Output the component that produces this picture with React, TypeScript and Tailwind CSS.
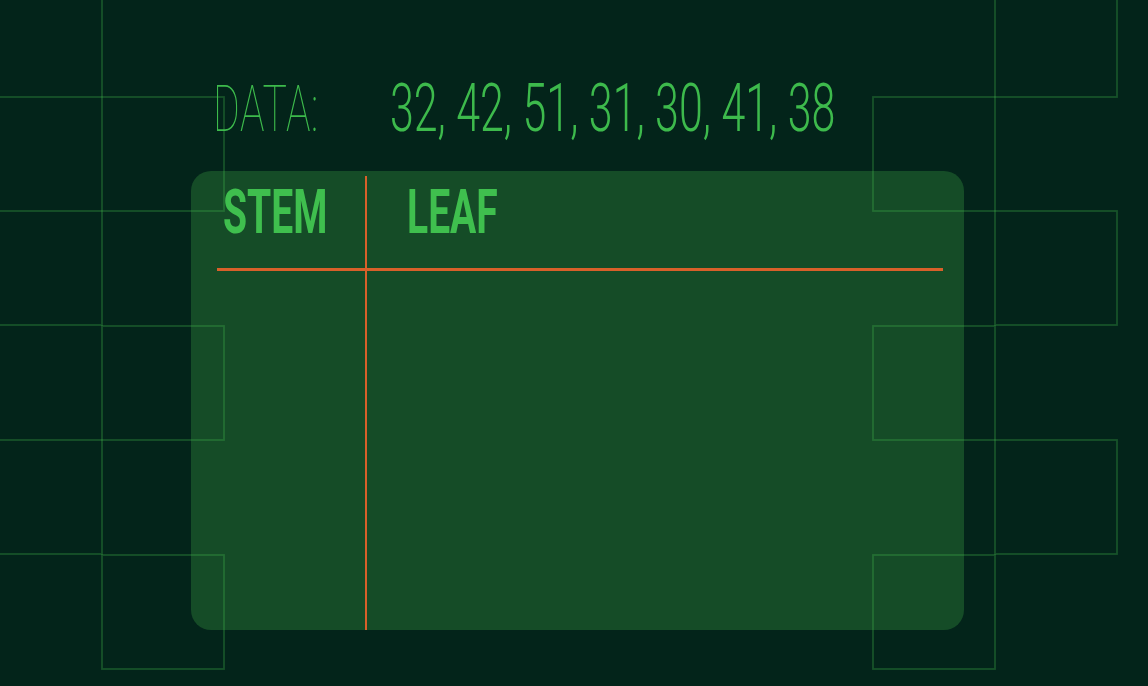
import React from "react";

const W = 122;
const H = 114;
const rects: Array<[number, number]> = [
  // column A (left, partially off-screen)
  [-20, -17], [-20, 211], [-20, 440],
  // column B
  [102, 97], [102, 326], [102, 555],
  // column C
  [873, 97], [873, 326], [873, 555],
  // column D
  [995, -17], [995, 211], [995, 440],
];

function Pattern() {
  return (
    <svg
      className="pointer-events-none absolute inset-0"
      width={1148}
      height={686}
      viewBox="0 0 1148 686"
    >
      {rects.map(([x, y], i) => (
        <rect
          key={i}
          x={x}
          y={y}
          width={W}
          height={H}
          fill="none"
          stroke="rgba(70,190,80,0.3)"
          strokeWidth={1.8}
        />
      ))}
    </svg>
  );
}

export default function App() {
  return (
    <div
      className="relative h-[686px] w-[1148px] overflow-hidden bg-[#03241a]"
      style={{ fontFamily: "Roboto, 'Liberation Sans', sans-serif" }}
    >
      <div className="flex flex-col pt-[74px]">
        <div className="flex h-[70px] items-center text-[#3dba4c]">
          <div className="ml-[213px] w-[177px]">
            <span className="inline-block origin-left scale-x-[0.63] text-[65px] font-thin leading-none tracking-[1px]">
              DATA:
            </span>
          </div>
          <span className="inline-block origin-left scale-x-[0.65] whitespace-nowrap text-[66px] font-light leading-none">
            32, 42, 51, 31, 30, 41, 38
          </span>
        </div>
        <div className="ml-[191px] mt-[27px] flex h-[459px] w-[773px] flex-col rounded-[20px] bg-[#154c27] pt-[5px]">
          <div className="flex h-[92px]">
            <div className="ml-[26px] flex w-[150px] border-r-[2.5px] border-[#d8602a] pt-[5px]">
              <span className="ml-[6px] inline-block origin-left scale-x-[0.63] text-[62px] font-bold leading-none text-[#3fbf4e]">
                STEM
              </span>
            </div>
            <div className="flex pl-[40px] pt-[5px]">
              <span className="inline-block origin-left scale-x-[0.63] text-[62px] font-bold leading-none text-[#3fbf4e]">
                LEAF
              </span>
            </div>
          </div>
          <div className="ml-[26px] mr-[21px] h-[2.5px] bg-[#d8602a]" />
          <div className="flex flex-1">
            <div className="ml-[26px] w-[150px] border-r-[2.5px] border-[#d8602a]" />
          </div>
        </div>
      </div>
      <Pattern />
    </div>
  );
}
